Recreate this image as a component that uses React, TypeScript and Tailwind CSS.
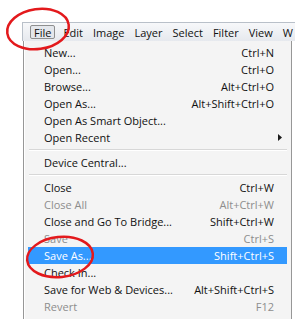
import { ReactNode } from "react";

type Item = {
  label?: string;
  shortcut?: string;
  disabled?: boolean;
  active?: boolean;
  submenu?: boolean;
  separator?: boolean;
};

const menus = ["Edit", "Image", "Layer", "Select", "Filter", "View", "W"];

const items: Item[] = [
  { label: "New...", shortcut: "Ctrl+N" },
  { label: "Open...", shortcut: "Ctrl+O" },
  { label: "Browse...", shortcut: "Alt+Ctrl+O" },
  { label: "Open As...", shortcut: "Alt+Shift+Ctrl+O" },
  { label: "Open As Smart Object..." },
  { label: "Open Recent", submenu: true },
  { separator: true },
  { label: "Device Central..." },
  { separator: true },
  { label: "Close", shortcut: "Ctrl+W" },
  { label: "Close All", shortcut: "Alt+Ctrl+W", disabled: true },
  { label: "Close and Go To Bridge...", shortcut: "Shift+Ctrl+W" },
  { label: "Save", shortcut: "Ctrl+S", disabled: true },
  { label: "Save As...", shortcut: "Shift+Ctrl+S", active: true },
  { label: "Check In..." },
  { label: "Save for Web & Devices...", shortcut: "Alt+Shift+Ctrl+S" },
  { label: "Revert", shortcut: "F12", disabled: true },
];

const MenuRow = ({ item }: { item: Item }): ReactNode => {
  if (item.separator) {
    return (
      <div className="h-[8px] flex items-center pl-[5px] pr-[4px]">
        <div className="w-full h-[2px] border-t border-[#d7d7d7] border-b border-b-white" />
      </div>
    );
  }

  const textColor = item.active
    ? "text-white"
    : item.disabled
      ? "text-[#8d8d8d]"
      : "text-[#111111]";

  return (
    <div
      className={`h-[17px] mx-[4px] flex items-center justify-between pl-[16px] pr-[13px] ${textColor} ${
        item.active ? "bg-[#3399ff]" : ""
      }`}
    >
      <span>{item.label}</span>
      {item.shortcut && <span>{item.shortcut}</span>}
      {item.submenu && (
        <svg width="4" height="7" viewBox="0 0 4 7" className="-mr-[8px]">
          <path d="M0 0 L4 3.5 L0 7 Z" fill="#1b1b1b" />
        </svg>
      )}
    </div>
  );
};

const App = () => {
  return (
    <div
      className="relative w-[295px] h-[319px] overflow-hidden bg-white pt-[22px] pl-[22px] text-[11px] leading-none"
      style={{ fontFamily: '"Open Sans", "Noto Sans", sans-serif' }}
    >
      <div className="h-[19px] flex items-center border-t border-l border-[#b9c0c9] bg-gradient-to-b from-[#f7f8fa] to-[#e6e9ee] text-[#111111] whitespace-nowrap">
        <div className="ml-[7px] h-[14px] px-[3px] flex items-center border border-[#8e8f8f] rounded-[2px] bg-[#e4e7ec]">
          File
        </div>
        <div className="flex items-center gap-[10px] ml-[8px]">
          {menus.map((m) => (
            <span key={m}>{m}</span>
          ))}
        </div>
      </div>

      <div className="ml-[1px] w-[269px] h-[280px] border-l border-r border-[#979797] bg-[#f4f4f4] pt-[3px] whitespace-nowrap shadow-[inset_1px_0_0_#ffffff]">
        {items.map((item, i) => (
          <MenuRow key={i} item={item} />
        ))}
      </div>

      <svg
        className="absolute left-0 top-0 pointer-events-none"
        width="295"
        height="319"
        viewBox="0 0 295 319"
      >
        <ellipse
          cx="38"
          cy="29"
          rx="31"
          ry="20"
          transform="rotate(-8 38 29)"
          fill="none"
          stroke="#e3191c"
          strokeWidth="2.5"
        />
        <ellipse
          cx="60"
          cy="257"
          rx="33"
          ry="20"
          transform="rotate(-6 60 257)"
          fill="none"
          stroke="#e3191c"
          strokeWidth="2.5"
        />
      </svg>
    </div>
  );
};

export default App;
